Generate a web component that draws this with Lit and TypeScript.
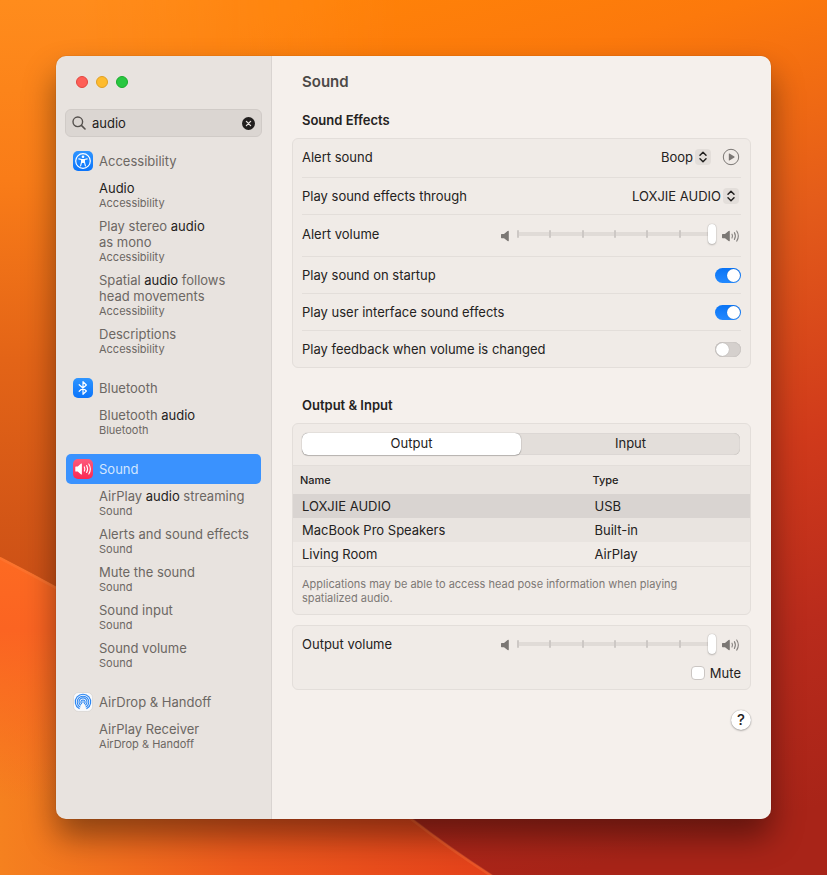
import { LitElement, html, svg, css, nothing } from "lit";
import { customElement, property, state } from "lit/decorators.js";
import { classMap } from "lit/directives/class-map.js";

interface Result {
  title: string;
  parent: string;
}

interface Section {
  name: string;
  icon: "accessibility" | "bluetooth" | "sound" | "airdrop";
  results: Result[];
}

const results = (parent: string, ...titles: string[]): Result[] =>
  titles.map((title) => ({ title, parent }));

const SECTIONS: Section[] = [
  {
    name: "Accessibility",
    icon: "accessibility",
    results: results(
      "Accessibility",
      "Audio",
      "Play stereo audio as\u00a0mono",
      "Spatial audio follows head movements",
      "Descriptions"
    ),
  },
  {
    name: "Bluetooth",
    icon: "bluetooth",
    results: results("Bluetooth", "Bluetooth audio"),
  },
  {
    name: "Sound",
    icon: "sound",
    results: results(
      "Sound",
      "AirPlay audio streaming",
      "Alerts and sound effects",
      "Mute the sound",
      "Sound input",
      "Sound volume"
    ),
  },
  {
    name: "AirDrop & Handoff",
    icon: "airdrop",
    results: results("AirDrop & Handoff", "AirPlay Receiver"),
  },
];

const DEVICES = [
  { name: "LOXJIE AUDIO", type: "USB" },
  { name: "MacBook Pro Speakers", type: "Built-in" },
  { name: "Living Room", type: "AirPlay" },
];

const GLYPHS = {
  accessibility: svg`
    <defs>
      <linearGradient id="g" x2="0" y2="1"><stop stop-color="#2f95ff"/><stop offset="1" stop-color="#0a74fb"/></linearGradient>
    </defs>
    <rect width="20" height="20" rx="5" fill="url(#g)"/>
    <circle cx="10" cy="10" r="7.3" fill="none" stroke="#fff" stroke-width="1.2"/>
    <circle cx="10" cy="5.7" r="1.3" fill="#fff"/>
    <path d="M5.8 7.9 8.6 8.5V11L7.6 14.9M14.2 7.9 11.4 8.5V11L12.4 14.9M8.6 8.5H11.4M8.8 11.2H11.2" fill="none" stroke="#fff" stroke-width="1.1" stroke-linecap="round" stroke-linejoin="round"/>
    <rect x="8.5" y="8" width="3" height="3.8" fill="#fff"/>`,
  bluetooth: svg`
    <defs>
      <linearGradient id="g" x2="0" y2="1"><stop stop-color="#2f95ff"/><stop offset="1" stop-color="#0a74fb"/></linearGradient>
    </defs>
    <rect width="20" height="20" rx="5" fill="url(#g)"/>
    <path d="M6.2 6.7 13.4 13 10 16.3V3.7L13.4 7 6.2 13.3" fill="none" stroke="#fff" stroke-width="1.2" stroke-linejoin="round" stroke-linecap="round"/>`,
  sound: svg`
    <defs>
      <linearGradient id="g" x2="0" y2="1"><stop stop-color="#fd5a7c"/><stop offset="1" stop-color="#fb2853"/></linearGradient>
    </defs>
    <rect width="20" height="20" rx="5" fill="url(#g)"/>
    <path d="M2.3 8.1Q2.3 7.5 2.9 7.5H4.7L8.1 4.6Q8.9 4.1 8.9 5V15Q8.9 15.9 8.1 15.4L4.7 12.5H2.9Q2.3 12.5 2.3 11.9Z" fill="#fff"/>
    <path d="M11.3 7.9Q12.5 10 11.3 12.1M13.6 6.5Q15.6 10 13.6 13.5M15.8 5Q18.9 10 15.8 15" fill="none" stroke="#fff" stroke-width="1.1" stroke-linecap="round"/>`,
  airdrop: svg`
    <rect x="0.5" y="0.5" width="19" height="19" rx="5" fill="#f8f9fb" stroke="#d6d2cf" stroke-width="0.7"/>
    <g fill="none" stroke="#2b86f2" stroke-width="1.1" stroke-linecap="round">
      <path d="M6.2 16.6A7.7 7.7 0 1 1 13.8 16.6"/>
      <path d="M6.9 14.9A5.8 5.8 0 1 1 13.1 14.9"/>
      <path d="M7.5 13A4 4 0 1 1 12.5 13"/>
      <path d="M8.6 11.6A2.1 2.1 0 1 1 11.4 11.6"/>
    </g>
    <circle cx="10" cy="10.1" r="0.8" fill="#2b86f2"/>`,
};

@customElement("section-icon")
export class SectionIcon extends LitElement {
  @property() name: Section["icon"] = "sound";

  static styles = css`
    :host {
      display: block;
      flex: none;
    }
    .glyph {
      display: block;
      width: 20px;
      height: 20px;
    }
  `;

  render() {
    return html`<svg class="glyph" viewBox="0 0 20 20" aria-hidden="true">${GLYPHS[this.name]}</svg>`;
  }
}

@customElement("volume-slider")
export class VolumeSlider extends LitElement {
  @property() label = "";
  @property({ type: Number }) value = 100;

  static styles = css`
    :host {
      display: flex;
      align-items: center;
      gap: 5px;
    }
    .icon {
      display: block;
      height: 14px;
      padding-top: 3px;
      flex: none;
    }
    .quiet {
      width: 9px;
    }
    .loud {
      width: 20px;
    }
    .slider {
      display: grid;
      align-items: center;
      width: 202px;
    }
    .ticks,
    .range {
      grid-area: 1 / 1;
    }
    .ticks {
      display: flex;
      justify-content: space-between;
      margin: 0 3px;
      background: linear-gradient(#e0dbd7, #e0dbd7) center / 100% 4px no-repeat;
    }
    .tick {
      width: 2px;
      height: 8px;
      background: #cdc8c5;
      border-radius: 1px;
    }
    .range {
      appearance: none;
      width: 100%;
      height: 20px;
      margin: 0;
      background: none;
    }
    .range::-webkit-slider-thumb {
      appearance: none;
      width: 8px;
      height: 20px;
      border-radius: 4px;
      background: #fff;
      box-shadow: 0 0 1px rgba(0, 0, 0, 0.35), 0 1px 2px rgba(0, 0, 0, 0.2);
    }
  `;

  render() {
    return html`
      <svg class="icon quiet" viewBox="0 0 9 14" aria-hidden="true">
        <path d="M1 5.6Q1 5 1.6 5H4L7.6 2Q8.8 1.3 8.8 2.4V11.6Q8.8 12.7 7.6 12L4 9.2H1.6Q1 9.2 1 8.6Z" fill="#7b7774" />
      </svg>
      <div class="slider">
        <div class="ticks">${Array.from({ length: 7 }, () => html`<span class="tick"></span>`)}</div>
        <input class="range" type="range" min="0" max="100" .value=${String(this.value)} aria-label=${this.label} />
      </div>
      <svg class="icon loud" viewBox="0 0 20 14" aria-hidden="true">
        <path d="M1 5.6Q1 5 1.6 5H4L7.6 2Q8.8 1.3 8.8 2.4V11.6Q8.8 12.7 7.6 12L4 9.2H1.6Q1 9.2 1 8.6Z" fill="#7b7774" />
        <path d="M11 5.2Q12 7 11 8.9M13.4 3.6Q15.4 7 13.4 10.5M15.7 2Q19 7 15.7 12.1" fill="none" stroke="#85817e" stroke-width="1.1" stroke-linecap="round" />
      </svg>
    `;
  }
}

@customElement("settings-sidebar")
export class SettingsSidebar extends LitElement {
  @state() private query = "audio";

  static styles = css`
    :host {
      display: block;
      padding: 20px 9px;
      background: #e8e3df;
      border-right: 1px solid #d9d4d1;
      color: #6c6763;
    }
    .lights {
      display: flex;
      gap: 8px;
      padding: 0 11px 21px;
    }
    .light {
      width: 12px;
      height: 12px;
      padding: 0;
      border: 1px solid;
      border-radius: 50%;
    }
    .close {
      background: #fe5f57;
      border-color: #e2463f;
    }
    .minimize {
      background: #febb2e;
      border-color: #e0a023;
    }
    .zoom {
      background: #28c740;
      border-color: #1aab2c;
    }
    .search {
      display: flex;
      align-items: center;
      gap: 6px;
      box-sizing: border-box;
      height: 28px;
      padding: 0 6px;
      margin-bottom: 9px;
      border: 1px solid #d0cbc7;
      border-radius: 6px;
      background: #dbd6d2;
    }
    .lens {
      width: 14px;
      height: 14px;
      flex: none;
    }
    .field {
      flex: 1;
      min-width: 0;
      padding: 0;
      border: 0;
      outline: 0;
      background: none;
      font: inherit;
      color: #1f1d1c;
    }
    .clear {
      display: block;
      width: 13px;
      height: 13px;
      padding: 0;
      border: 0;
      background: none;
    }
    .cross {
      display: block;
    }
    .section {
      margin: 0 1px 13px;
    }
    .heading {
      display: flex;
      align-items: center;
      gap: 6px;
      height: 30px;
      padding: 0 7px;
      border-radius: 5px;
      color: inherit;
      text-decoration: none;
    }
    .selected {
      background: #3a92fe;
      color: #d3e6fe;
    }
    .results {
      margin: 0;
      padding: 0;
      list-style: none;
    }
    .result {
      display: block;
      padding: 4px 7px 4px 33px;
      line-height: 16px;
      color: inherit;
      text-decoration: none;
    }
    .match {
      color: #1f1d1c;
      background: none;
    }
    .parent {
      display: block;
      font-size: 11px;
      line-height: 14px;
    }
  `;

  private highlight(text: string) {
    if (!this.query) return text;
    const at = text.toLowerCase().indexOf(this.query);
    if (at < 0) return text;
    const end = at + this.query.length;
    return html`${text.slice(0, at)}<mark class="match">${text.slice(at, end)}</mark>${text.slice(end)}`;
  }

  render() {
    return html`
      <div class="lights">
        <button class="light close" aria-label="Close"></button>
        <button class="light minimize" aria-label="Minimize"></button>
        <button class="light zoom" aria-label="Zoom"></button>
      </div>
      <div class="search">
        <svg class="lens" viewBox="0 0 14 14" aria-hidden="true">
          <circle cx="5.8" cy="5.8" r="4.8" fill="none" stroke="#55514e" stroke-width="1.4" />
          <path d="M9.4 9.4 13 13" stroke="#55514e" stroke-width="1.6" stroke-linecap="round" />
        </svg>
        <input
          class="field"
          type="text"
          aria-label="Search"
          .value=${this.query}
          @input=${(e: Event) => (this.query = (e.target as HTMLInputElement).value.toLowerCase())}
        />
        <button class="clear" aria-label="Clear search" @click=${() => (this.query = "")}>
          <svg class="cross" viewBox="0 0 13 13" aria-hidden="true">
            <circle cx="6.5" cy="6.5" r="6.5" fill="#211f1e" />
            <path d="M4.4 4.4 8.6 8.6M8.6 4.4 4.4 8.6" stroke="#e4dfdb" stroke-width="1.3" stroke-linecap="round" />
          </svg>
        </button>
      </div>
      <nav>
        ${SECTIONS.map(
          (section) => html`
            <div class="section">
              <a
                href="#${section.icon}"
                class=${classMap({ heading: true, selected: section.name === "Sound" })}
                aria-current=${section.name === "Sound" ? "page" : nothing}
              >
                <section-icon name=${section.icon}></section-icon>${section.name}
              </a>
              <ul class="results">
                ${section.results.map(
                  (r) => html`<li>
                    <a class="result" href="#${section.icon}">${this.highlight(r.title)}<span class="parent">${r.parent}</span></a>
                  </li>`
                )}
              </ul>
            </div>
          `
        )}
      </nav>
    `;
  }
}

@customElement("sound-pane")
export class SoundPane extends LitElement {
  @state() private tab = "Output";
  @state() private device = "LOXJIE AUDIO";

  static styles = css`
    :host {
      display: block;
      min-width: 0;
      padding: 16px 20px;
      background: #f5f0ec;
      color: #242221;
    }
    .title {
      margin: 0 10px 18px;
      font-size: 15px;
      line-height: 20px;
      font-weight: 600;
      color: #4c4947;
    }
    .subtitle {
      margin: 0 10px 10px;
      font-size: 13px;
      line-height: 16px;
      font-weight: 600;
      padding-top: 2px;
    }
    .card {
      border: 1px solid #e3deda;
      border-radius: 6px;
      background: #f0ebe7;
    }
    .effects {
      padding: 0 9px;
      margin-bottom: 27px;
    }
    .row {
      display: flex;
      align-items: center;
      justify-content: space-between;
      min-height: 36px;
    }
    .row + .row {
      border-top: 1px solid #e3deda;
    }
    .first {
      padding-bottom: 2px;
    }
    .volume {
      min-height: 38px;
      padding-bottom: 3px;
    }
    .picker {
      display: flex;
      align-items: center;
      gap: 12px;
      padding-right: 2px;
    }
    .popup {
      display: grid;
      align-items: center;
      justify-items: end;
    }
    .select,
    .arrows {
      grid-area: 1 / 1;
    }
    .select {
      appearance: none;
      field-sizing: content;
      padding: 0 18px 0 0;
      border: 0;
      background: none;
      font: inherit;
      line-height: 16px;
      color: inherit;
    }
    .arrows {
      width: 16px;
      height: 16px;
      border-radius: 4px;
      background: #e3deda;
      pointer-events: none;
    }
    .play {
      display: block;
      width: 16px;
      height: 16px;
      padding: 0;
      border: 0;
      background: none;
    }
    .triangle {
      display: block;
      overflow: visible;
    }
    .switch {
      appearance: none;
      display: flex;
      align-items: center;
      box-sizing: border-box;
      width: 26px;
      height: 15px;
      margin: 0;
      padding: 1px;
      border-radius: 8px;
      background: #d5d0cd;
      box-shadow: inset 0 0 1px rgba(0, 0, 0, 0.3);
    }
    .switch::before {
      content: "";
      width: 13px;
      height: 13px;
      border-radius: 50%;
      background: #fff;
      box-shadow: 0 0 1px rgba(0, 0, 0, 0.3);
    }
    .switch:checked {
      justify-content: flex-end;
      background: linear-gradient(#0a74f5, #2389ff);
      box-shadow: none;
    }
    .devices {
      margin-bottom: 10px;
    }
    .tabs {
      display: grid;
      grid-template-columns: 1fr 1fr;
      margin: 9px 10px 10px 9px;
      border-radius: 6px;
      background: #e3deda;
      box-shadow: inset 0 0 1px rgba(0, 0, 0, 0.3);
    }
    .tab {
      height: 22px;
      padding: 0 0 2px;
      border: 0;
      border-radius: 6px;
      background: none;
      font: inherit;
      color: inherit;
    }
    .active {
      background: #fff;
      box-shadow: 0 0 1px rgba(0, 0, 0, 0.5), 0 1px 1px rgba(0, 0, 0, 0.2);
    }
    .table {
      width: 100%;
      border-collapse: collapse;
      table-layout: fixed;
    }
    .head {
      width: 36%;
      height: 28px;
      box-sizing: border-box;
      padding: 0 7px;
      background: #e9e4e0;
      border-top: 1px solid #e3deda;
      text-align: left;
      font-size: 11px;
      font-weight: 500;
    }
    .wide {
      width: 64%;
    }
    .cell {
      height: 24px;
      padding: 0 9px;
    }
    .device:nth-child(even) {
      background: #e9e4e0;
    }
    .chosen {
      background: #d9d4d1;
    }
    .note {
      margin: 0;
      padding: 10px 60px 9px 9px;
      border-top: 1px solid #e3deda;
      font-size: 11px;
      line-height: 14px;
      color: #7d7875;
    }
    .output {
      padding: 0 9px 8px;
    }
    .level {
      min-height: 36px;
      padding-bottom: 3px;
    }
    .mute {
      display: flex;
      align-items: center;
      justify-content: flex-end;
      gap: 5px;
      line-height: 16px;
    }
    .box {
      appearance: none;
      box-sizing: border-box;
      width: 14px;
      height: 14px;
      margin: 0;
      border: 1px solid #cbc6c3;
      border-radius: 4px;
      background: #fff;
    }
    .footer {
      display: flex;
      justify-content: flex-end;
      padding-top: 20px;
    }
    .help {
      width: 20px;
      height: 20px;
      padding: 0;
      border: 0;
      border-radius: 50%;
      background: #fff;
      box-shadow: 0 0 1px rgba(0, 0, 0, 0.4), 0 1px 2px rgba(0, 0, 0, 0.25);
      font: inherit;
      font-size: 15px;
      line-height: 20px;
      font-weight: 500;
      color: #242221;
    }
  `;

  private popup(id: string, option: string) {
    return html`<span class="popup">
      <select class="select" id=${id}>
        <option>${option}</option>
      </select>
      <svg class="arrows" viewBox="0 0 16 16" aria-hidden="true">
        <path d="M5 6.2 8 3.3 11 6.2M5 9.8 8 12.7 11 9.8" fill="none" stroke="#242221" stroke-width="1.5" stroke-linecap="round" stroke-linejoin="round" />
      </svg>
    </span>`;
  }

  private toggle(id: string, label: string, on: boolean) {
    return html`<div class="row">
      <label for=${id}>${label}</label>
      <input class="switch" type="checkbox" role="switch" id=${id} .checked=${on} />
    </div>`;
  }

  render() {
    return html`
      <h1 class="title">Sound</h1>
      <h2 class="subtitle">Sound Effects</h2>
      <div class="card effects">
        <div class="row first">
          <label for="alert">Alert sound</label>
          <span class="picker">
            ${this.popup("alert", "Boop")}
            <button class="play" aria-label="Play alert sound">
              <svg class="triangle" viewBox="0 0 16 16" aria-hidden="true">
                <circle cx="8" cy="8" r="7.7" fill="none" stroke="#7b7774" />
                <path d="M5.8 4.8Q5.8 4.2 6.4 4.5L11.4 7.6Q11.9 8 11.4 8.4L6.4 11.5Q5.8 11.8 5.8 11.2Z" fill="#7b7774" />
              </svg>
            </button>
          </span>
        </div>
        <div class="row">
          <label for="through">Play sound effects through</label>
          <span class="picker">${this.popup("through", "LOXJIE AUDIO")}</span>
        </div>
        <div class="row volume">
          <span>Alert volume</span>
          <volume-slider label="Alert volume"></volume-slider>
        </div>
        ${this.toggle("startup", "Play sound on startup", true)}
        ${this.toggle("interface", "Play user interface sound effects", true)}
        ${this.toggle("feedback", "Play feedback when volume is changed", false)}
      </div>

      <h2 class="subtitle">Output &amp; Input</h2>
      <div class="card devices">
        <div class="tabs" role="tablist">
          ${["Output", "Input"].map(
            (name) => html`<button
              class=${classMap({ tab: true, active: this.tab === name })}
              role="tab"
              aria-selected=${this.tab === name}
              @click=${() => (this.tab = name)}
            >
              ${name}
            </button>`
          )}
        </div>
        <table class="table">
          <thead>
            <tr>
              <th class="head wide" scope="col">Name</th>
              <th class="head" scope="col">Type</th>
            </tr>
          </thead>
          <tbody>
            ${DEVICES.map(
              (d) => html`<tr
                class=${classMap({ device: true, chosen: this.device === d.name })}
                @click=${() => (this.device = d.name)}
              >
                <td class="cell">${d.name}</td>
                <td class="cell">${d.type}</td>
              </tr>`
            )}
          </tbody>
        </table>
        <p class="note">
          Applications may be able to access head pose information when playing spatialized audio.
        </p>
      </div>

      <div class="card output">
        <div class="row level">
          <span>Output volume</span>
          <volume-slider label="Output volume"></volume-slider>
        </div>
        <label class="mute"><input class="box" type="checkbox" />Mute</label>
      </div>

      <div class="footer"><button class="help" aria-label="Help">?</button></div>
    `;
  }
}

@customElement("app-root")
export class AppRoot extends LitElement {
  static styles = css`
    :host {
      display: grid;
      min-height: 100vh;
      font-family: Inter, "Liberation Sans", sans-serif;
      font-size: 13px;
      line-height: 16px;
    }
    .wallpaper {
      position: absolute;
      inset: 0;
      width: 100%;
      height: 100%;
    }
    .window {
      position: relative;
      display: grid;
      grid-template-columns: 216px 1fr;
      margin: 56px;
      border-radius: 10px;
      overflow: hidden;
      box-shadow: 0 0 1px rgba(0, 0, 0, 0.4), 0 18px 32px rgba(0, 0, 0, 0.42);
    }
  `;

  render() {
    return html`
      <svg class="wallpaper" viewBox="0 0 827 875" preserveAspectRatio="none" aria-hidden="true">
        <defs>
          <linearGradient id="sky" gradientUnits="userSpaceOnUse" x1="330" y1="0" x2="560" y2="875">
            <stop offset="0" stop-color="#ff8208" />
            <stop offset="0.12" stop-color="#fc790c" />
            <stop offset="0.35" stop-color="#e45c1a" />
            <stop offset="0.6" stop-color="#d03a1b" />
            <stop offset="0.8" stop-color="#b92b1c" />
            <stop offset="1" stop-color="#a82418" />
          </linearGradient>
          <linearGradient id="west" x2="0" y2="1">
            <stop offset="0" stop-color="#ff8c1c" />
            <stop offset="0.3" stop-color="#f97c18" />
            <stop offset="0.6" stop-color="#e36417" />
            <stop offset="1" stop-color="#cb4f16" />
          </linearGradient>
          <linearGradient id="fade">
            <stop offset="0" stop-color="#fff" />
            <stop offset="0.2" stop-color="#fff" />
            <stop offset="1" stop-color="#000" />
          </linearGradient>
          <mask id="side"><rect width="400" height="700" fill="url(#fade)" /></mask>
          <linearGradient id="dune" gradientUnits="userSpaceOnUse" x1="0" y1="875" x2="480" y2="875">
            <stop offset="0" stop-color="#f5811f" />
            <stop offset="0.5" stop-color="#ee5a1d" />
            <stop offset="1" stop-color="#e5431b" />
          </linearGradient>
          <linearGradient id="crest" gradientUnits="userSpaceOnUse" x1="0" y1="557" x2="0" y2="800">
            <stop offset="0" stop-color="#fd6a22" />
            <stop offset="0.3" stop-color="#fb6422" />
            <stop offset="1" stop-color="#fb6422" stop-opacity="0" />
          </linearGradient>
        </defs>
        <rect width="827" height="875" fill="url(#sky)" />
        <rect width="400" height="600" fill="url(#west)" mask="url(#side)" />
        <path d="M0 557Q210 665 410 817 450 848 492 875H0Z" fill="url(#dune)" />
        <path d="M0 557Q210 665 410 817 450 848 492 875H0Z" fill="url(#crest)" />
        <path d="M0 558Q210 666 410 818 450 849 492 876" fill="none" stroke="#ff8a4a" stroke-opacity="0.25" stroke-width="3" />
      </svg>
      <main class="window">
        <settings-sidebar></settings-sidebar>
        <sound-pane></sound-pane>
      </main>
    `;
  }
}
